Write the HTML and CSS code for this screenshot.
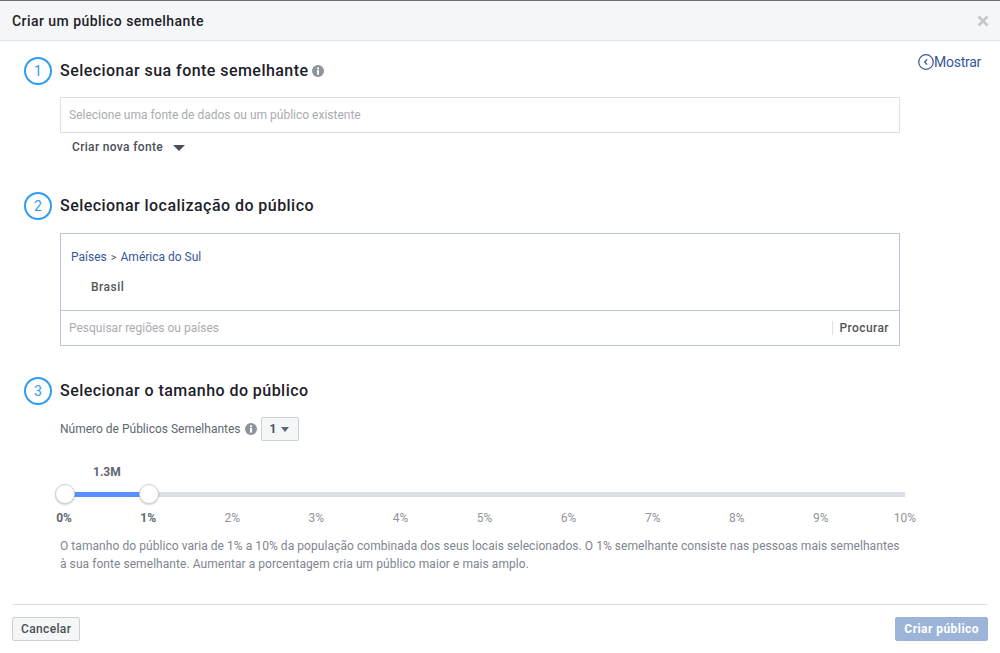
FILE: index.html
```html
<!DOCTYPE html>
<html lang="pt">
<head>
<meta charset="utf-8">
<title>Criar um público semelhante</title>
<link rel="stylesheet" href="styles.css">
</head>
<body>
<div class="dialog">
  <header class="head">
    <h1 class="head-title">Criar um público semelhante</h1>
    <svg class="close" width="12" height="12" viewBox="0 0 12 12"><path d="M1.5 1.5l9 9M10.5 1.5l-9 9" stroke="#c4c7cc" stroke-width="2.6" fill="none"/></svg>
  </header>
  <main class="body">
    <a class="show">
      <svg width="16" height="16" viewBox="0 0 16 16"><circle cx="8" cy="8" r="7.3" fill="none" stroke="#365899" stroke-width="1.2"/><path d="M9.2 5.4L6.6 8l2.6 2.6" fill="none" stroke="#365899" stroke-width="1.3"/></svg>
      <span>Mostrar</span>
    </a>
    <section class="step step-1">
      <div class="step-head">
        <span class="num">1</span>
        <h2 class="step-title">Selecionar sua fonte semelhante</h2>
        <svg class="info" width="12" height="12" viewBox="0 0 12 12"><circle cx="6" cy="6" r="6" fill="#8d949e"/><rect x="5" y="5" width="2" height="4.6" fill="#fff"/><rect x="5" y="2.4" width="2" height="1.8" fill="#fff"/></svg>
      </div>
      <div class="indent">
        <div class="input source">Selecione uma fonte de dados ou um público existente</div>
        <div class="new-source"><span>Criar nova fonte</span><i class="caret-big"></i></div>
      </div>
    </section>
    <section class="step step-2">
      <div class="step-head">
        <span class="num">2</span>
        <h2 class="step-title">Selecionar localização do público</h2>
      </div>
      <div class="indent">
        <div class="location">
          <div class="crumbs"><a>Países</a><span class="sep">&gt;</span><a>América do Sul</a></div>
          <div class="place">Brasil</div>
          <div class="search">
            <span class="search-ph">Pesquisar regiões ou países</span>
            <span class="search-btn">Procurar</span>
          </div>
        </div>
      </div>
    </section>
    <section class="step step-3">
      <div class="step-head">
        <span class="num">3</span>
        <h2 class="step-title">Selecionar o tamanho do público</h2>
      </div>
      <div class="indent">
        <div class="count">
          <span>Número de Públicos Semelhantes</span>
          <svg class="info" width="12" height="12" viewBox="0 0 12 12"><circle cx="6" cy="6" r="6" fill="#8d949e"/><rect x="5" y="5" width="2" height="4.6" fill="#fff"/><rect x="5" y="2.4" width="2" height="1.8" fill="#fff"/></svg>
          <span class="select">1<i class="caret-small"></i></span>
        </div>
      </div>
      <div class="slider">
        <div class="value">1.3M</div>
        <div class="track"><div class="fill"></div><span class="thumb thumb-a"></span><span class="thumb thumb-b"></span></div>
        <div class="ticks">
          <span class="on">0%</span><span class="on">1%</span><span>2%</span><span>3%</span><span>4%</span><span>5%</span><span>6%</span><span>7%</span><span>8%</span><span>9%</span><span>10%</span>
        </div>
      </div>
      <p class="note indent">O tamanho do público varia de 1% a 10% da população combinada dos seus locais selecionados. O 1% semelhante consiste nas pessoas mais semelhantes à sua fonte semelhante. Aumentar a porcentagem cria um público maior e mais amplo.</p>
    </section>
  </main>
  <footer class="foot">
    <button class="btn">Cancelar</button>
    <button class="btn primary">Criar público</button>
  </footer>
</div>
</body>
</html>
```
FILE: styles.css
```css
* { box-sizing: border-box; }
html, body { margin: 0; height: 100%; }
body { font-family: Roboto, "Liberation Sans", sans-serif; font-size: 12px; color: #4b4f56; background: #fff; overflow: hidden; }
.dialog { width: 1000px; height: 653px; display: flex; flex-direction: column; border-top: 1px solid #6f6f6f; }
.head { height: 40px; flex: none; display: flex; align-items: center; justify-content: space-between; padding: 0 12px; background: #f5f6f7; border-bottom: 1px solid #e5e5e5; }
.head-title { margin: 0; font-size: 14px; font-weight: 500; color: #1d2129; letter-spacing: .45px; }
.close { display: block; margin-top: 1px; margin-right: -1px; }
.body { position: relative; flex: 1; padding: 16px 0 0 24px; min-height: 0; }
.show { position: absolute; top: 13px; left: 918px; display: flex; align-items: center; font-size: 14px; letter-spacing: -.25px; color: #365899; line-height: 16px; }
.step-head { display: flex; align-items: center; height: 28px; }
.num { width: 28px; height: 28px; flex: none; border: 2px solid #2d9cf4; border-radius: 50%; display: flex; align-items: center; justify-content: center; font-size: 14px; color: #2d9cf4; }
.step-title { margin: 0 0 2px 8px; font-size: 16px; font-weight: 500; color: #1d2129; letter-spacing: .45px; }
.step-head .info { margin-left: 4px; margin-top: 0; }
.indent { margin-left: 36px; }
.step-1 { height: 135px; }
.input { height: 36px; width: 840px; border: 1px solid #dddfe2; display: flex; align-items: center; padding-left: 8px; color: #a9acb2; margin-top: 12px; }
.new-source { display: flex; align-items: center; height: 28px; padding-left: 12px; font-weight: 500; letter-spacing: .33px; color: #4b4f56; }
.caret-big { margin-left: 10px; margin-top: 1px; border: 6px solid transparent; border-top-color: #4b4f56; border-bottom: 0; }
.step-2 { height: 185px; }
.location { margin-top: 13px; width: 840px; height: 113px; border: 1px solid #bcc5d6; display: flex; flex-direction: column; }
.crumbs { padding: 15px 0 0 10px; height: 37px; line-height: 16px; color: #365899; }
.sep { margin: 0 4px; color: #4b4f56; font-size: 11px; }
.place { padding-left: 30px; height: 39px; line-height: 32px; color: #555; font-weight: 500; letter-spacing: .5px; }
.search { flex: 1; border-top: 1px solid #bcc5d6; display: flex; align-items: center; justify-content: space-between; padding: 0 10px 0 8px; }
.search-ph { color: #a9acb2; }
.search-btn { border-left: 1px solid #dddfe2; padding-left: 7px; height: 14px; line-height: 14px; color: #555; font-weight: 500; letter-spacing: .4px; }
.count { display: flex; align-items: center; height: 24px; margin-top: 12px; color: #606770; }
.count .info { margin-left: 4px; }
.select { width: 38px; height: 24px; margin-left: 4px; display: flex; align-items: center; padding-left: 8px; background: #f5f6f7; border: 1px solid #ccd0d5; border-radius: 2px; font-weight: 700; color: #4b4f56; }
.caret-small { margin-left: 5px; border: 4.5px solid transparent; border-top: 5px solid #606770; border-bottom: 0; }
.slider { margin-top: 23px; margin-left: -2px; }
.value { margin-left: 71px; height: 16px; line-height: 16px; font-weight: 700; color: #606770; }
.track { position: relative; margin: 12px 0 0 43px; width: 840px; height: 5px; background: #dddfe6; }
.fill { position: absolute; left: 0; top: 0; width: 84px; height: 5px; background: #5890ff; }
.thumb { position: absolute; top: -8px; width: 20px; height: 20px; border-radius: 50%; background: #fff; border: 1px solid #ccd0d5; box-shadow: 0 1px 2px rgba(0,0,0,.2); }
.thumb-a { left: -10px; }
.thumb-b { left: 74px; }
.ticks { display: grid; grid-template-columns: repeat(11, 84.1px); margin-top: 14px; height: 14px; line-height: 14px; color: #90949c; text-align: center; }
.ticks .on { color: #606770; font-weight: 700; }
.note { margin-top: 12px; margin-bottom: 0; width: 845px; line-height: 18px; color: #7f8590; letter-spacing: .06px; }
.foot { height: 49px; flex: none; margin: 0 12px; display: flex; align-items: flex-start; justify-content: space-between; padding-top: 12px; border-top: 1px solid #e0e0e0; }
.btn { height: 24px; padding: 0 8px; font: 500 12px Roboto, "Liberation Sans", sans-serif; letter-spacing: .35px; color: #4b4f56; background: #f5f6f7; border: 1px solid #ccd0d5; border-radius: 2px; }
.primary { color: #fff; font-weight: 700; letter-spacing: .45px; background: #9cb4d8; border-color: #9cb4d8; }
```
